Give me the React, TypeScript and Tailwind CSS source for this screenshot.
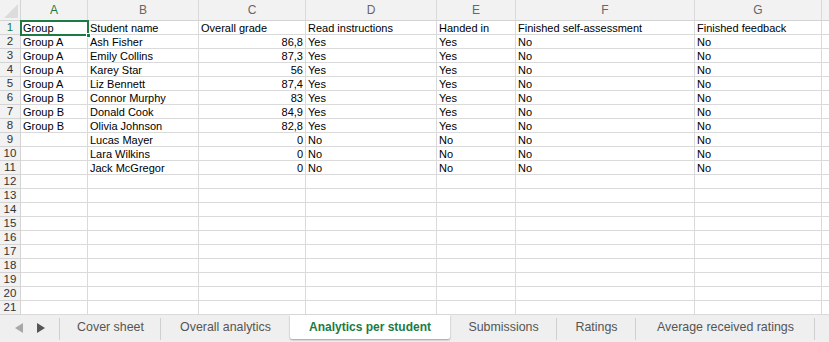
import React from "react";

const COLS = [67, 111, 107, 131, 79, 179, 127];
const LETTERS = ["A", "B", "C", "D", "E", "F", "G"];

type Cell = { v: string; right?: boolean };

const header: Cell[] = [
  { v: "Group" },
  { v: "Student name" },
  { v: "Overall grade" },
  { v: "Read instructions" },
  { v: "Handed in" },
  { v: "Finished self-assessment" },
  { v: "Finished feedback" },
];

const students: [string, string, string, string, string][] = [
  ["Group A", "Ash Fisher", "86,8", "Yes", "Yes"],
  ["Group A", "Emily Collins", "87,3", "Yes", "Yes"],
  ["Group A", "Karey Star", "56", "Yes", "Yes"],
  ["Group A", "Liz Bennett", "87,4", "Yes", "Yes"],
  ["Group B", "Connor Murphy", "83", "Yes", "Yes"],
  ["Group B", "Donald Cook", "84,9", "Yes", "Yes"],
  ["Group B", "Olivia Johnson", "82,8", "Yes", "Yes"],
  ["", "Lucas Mayer", "0", "No", "No"],
  ["", "Lara Wilkins", "0", "No", "No"],
  ["", "Jack McGregor", "0", "No", "No"],
];

const rows: Cell[][] = [header];
students.forEach((s) => {
  rows.push([
    { v: s[0] },
    { v: s[1] },
    { v: s[2], right: true },
    { v: s[3] },
    { v: s[4] },
    { v: "No" },
    { v: "No" },
  ]);
});
while (rows.length < 21) rows.push(COLS.map(() => ({ v: "" })));

const tabs = [
  { name: "Cover sheet", w: 101 },
  { name: "Overall analytics", w: 129 },
  { name: "Analytics per student", w: 160, active: true },
  { name: "Submissions", w: 107 },
  { name: "Ratings", w: 79 },
  { name: "Average received ratings", w: 179 },
];

export default function App() {
  return (
    <div
      className="w-[829px] h-[342px] overflow-hidden bg-white flex flex-col"
      style={{ fontFamily: '"Liberation Sans", Arial, sans-serif' }}
    >
      {/* column header row */}
      <div className="flex h-[21px] shrink-0 bg-[#f2f2f2] border-b border-[#d4d4d4]">
        <div className="w-[21px] shrink-0 border-r border-[#d4d4d4] relative">
          <svg className="absolute right-[2px] bottom-[2px]" width="14" height="14" viewBox="0 0 14 14">
            <polygon points="14,0 14,14 0,14" fill="#dcdcdc" />
          </svg>
        </div>
        {COLS.map((w, i) => (
          <div
            key={i}
            style={{ width: w }}
            className={`shrink-0 border-r border-[#d9d9d9] flex items-center justify-center text-[12px] ${
              i === 0 ? "text-[#1d7a45]" : "text-[#666]"
            }`}
          >
            {LETTERS[i]}
          </div>
        ))}
        <div className="flex-1" />
      </div>

      {/* body */}
      <div className="relative flex flex-col">
        {rows.map((r, ri) => (
          <div key={ri} className="flex h-[14px] shrink-0">
            <div
              className={`w-[21px] shrink-0 bg-[#f2f2f2] border-r border-b border-[#d4d4d4] flex items-center justify-center pt-[1px] text-[11.5px] leading-none ${
                ri === 0 ? "text-[#1d7a45]" : "text-[#333]"
              }`}
            >
              {ri + 1}
            </div>
            {r.map((c, ci) => (
              <div
                key={ci}
                style={{ width: COLS[ci] }}
                className={`shrink-0 border-r border-b border-[#dadada] flex items-center px-[2px] pt-[1px] text-[11px] leading-none text-black whitespace-nowrap overflow-hidden ${
                  c.right ? "justify-end" : "justify-start"
                }`}
              >
                {c.v}
              </div>
            ))}
            <div className="flex-1 border-b border-[#dadada]" />
          </div>
        ))}
        {/* selection box on A1 */}
        <div className="absolute left-[20px] top-[-1px] w-[69px] h-[16px] border-2 border-[#1d7a45] pointer-events-none">
          <div className="absolute right-[-4px] bottom-[-4px] w-[5px] h-[5px] bg-[#1d7a45] border border-white" />
        </div>
      </div>

      {/* tab bar */}
      <div className="flex-1 flex bg-[#efefef] items-start">
        <div className="w-[60px] h-[24px] shrink-0 flex items-center relative">
          <div className="flex-1 flex items-center justify-center gap-[14px] pt-[2px]">
            <svg width="8" height="10" viewBox="0 0 8 10">
              <polygon points="8,0 8,10 0,5" fill="#a8a8a8" />
            </svg>
            <svg width="8" height="10" viewBox="0 0 8 10">
              <polygon points="0,0 0,10 8,5" fill="#555" />
            </svg>
          </div>
          <div className="absolute right-0 top-[3px] bottom-[-1px] w-px bg-[#cfcfcf]" />
        </div>
        {tabs.map((t, i) => {
          const next = tabs[i + 1];
          if (t.active) {
            return (
              <div
                key={i}
                style={{ width: t.w }}
                className="h-[24px] shrink-0 bg-white flex items-center justify-center text-[12px] font-bold text-[#1d7a45] shadow-[0_1px_2px_rgba(0,0,0,0.35)] rounded-b-[2px] z-10"
              >
                {t.name}
              </div>
            );
          }
          return (
            <div key={i} style={{ width: t.w }} className="h-[24px] shrink-0 flex items-center relative">
              <span className="flex-1 text-center text-[12.4px] text-[#555]">{t.name}</span>
              {!(next && next.active) && (
                <div className="absolute right-0 top-[3px] bottom-[-1px] w-px bg-[#cfcfcf]" />
              )}
            </div>
          );
        })}
      </div>
    </div>
  );
}
